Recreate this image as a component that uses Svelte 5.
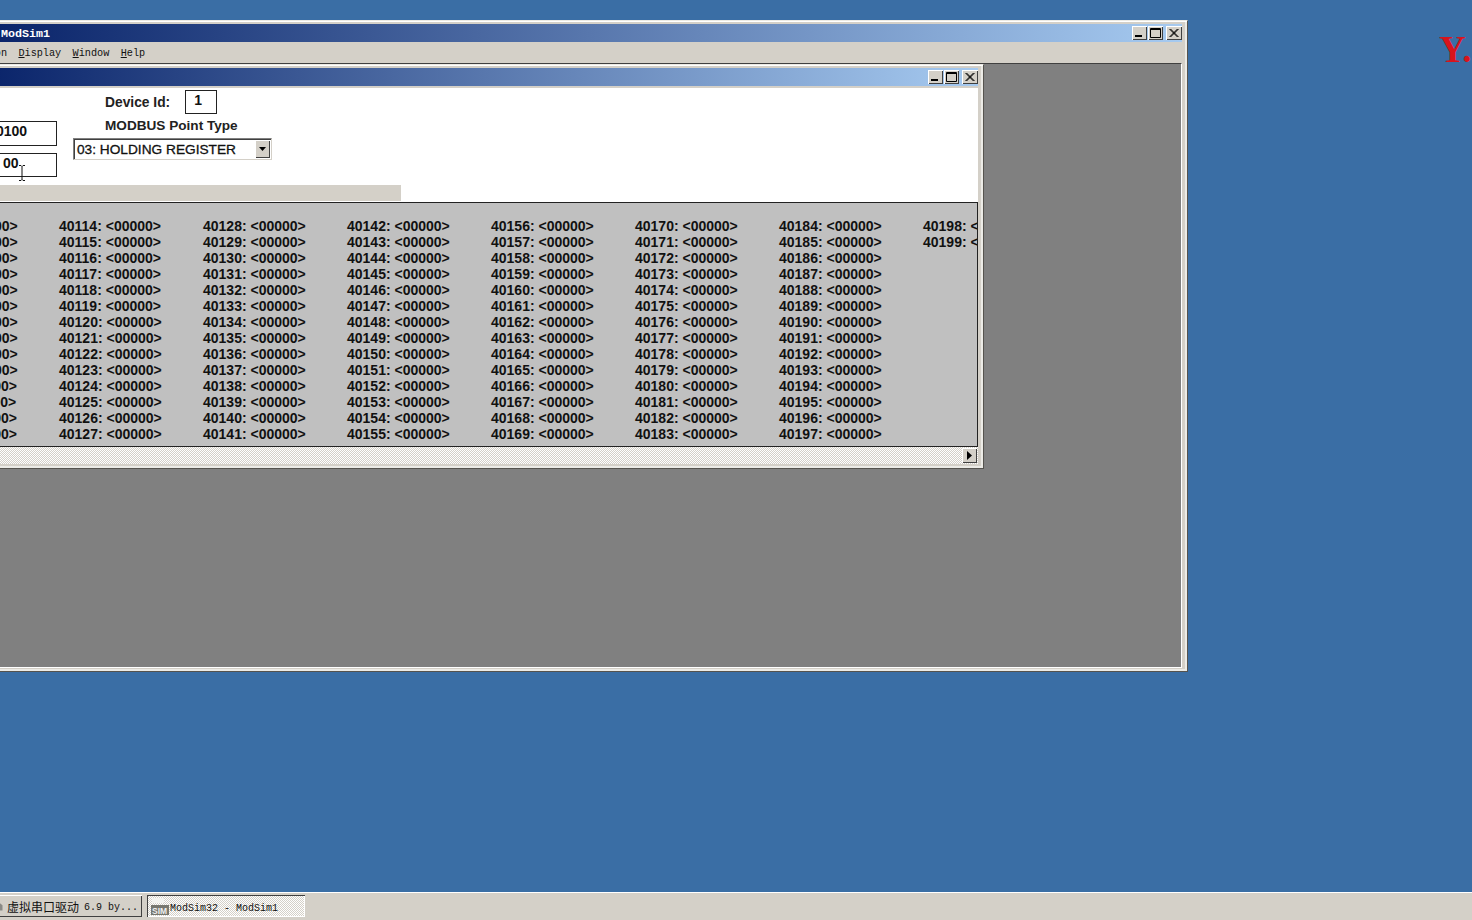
<script>
   // registers 40100..40199, column-wise, 14 per column
   const registers = Array.from({ length: 100 }, (_, i) => 40100 + i);
   const menus = ["File", "Connection", "Display", "Window", "Help"];
</script>

{#snippet caption()}
   <div class="caps">
      <span class="cap"><svg viewBox="0 0 15 14"><rect x="3" y="9" width="7" height="2" /></svg></span>
      <span class="cap"><svg viewBox="0 0 15 14"><path d="M2.5 2.5h10v9h-10z M2.5 3.5h10" fill="none" stroke="#000" /></svg></span>
      <span class="cap close"><svg viewBox="0 0 15 14"><path d="M3.5 3l8 8M4.5 3l8 8M11.5 3l-8 8M12.5 3l-8 8" fill="none" stroke="#000" /></svg></span>
   </div>
{/snippet}

<div class="desktop">
   <div class="workspace">
      <span class="wallpaper-text">Y.</span>

      <div class="window main">
         <div class="titlebar">
            <span class="title">ModSim32 - ModSim1</span>
            {@render caption()}
         </div>
         <div class="menubar">
            {#each menus as item}
               <span><u>{item[0]}</u>{item.slice(1)}</span>
            {/each}
         </div>

         <div class="client">
            <div class="window child">
               <div class="titlebar small">
                  <span class="title"></span>
                  {@render caption()}
               </div>

               <div class="form">
                  <div class="fields">
                     <div class="left-col">
                        <div class="box addr">0100</div>
                        <div class="box len">00</div>
                     </div>
                     <div class="right-col">
                        <div class="device">
                           <span class="label">Device Id:</span>
                           <span class="box id">1</span>
                        </div>
                        <div class="label point">MODBUS Point Type</div>
                        <div class="combo">
                           <span>03: HOLDING REGISTER</span>
                           <span class="combo-btn"><svg viewBox="0 0 15 17"><path d="M4 7h7l-3.5 4z" /></svg></span>
                        </div>
                     </div>
                  </div>
                  <div class="statusbar"></div>
                  <svg class="ibeam" viewBox="0 0 8 16"><path d="M1 .5h2l1 1 1-1h2M4 1.5v13M1 15.5h2l1-1 1 1h2" fill="none" stroke="#111" /></svg>
               </div>

               <div class="registers">
                  {#each registers as r}
                     <span>{r}: &lt;00000&gt;</span>
                  {/each}
               </div>

               <div class="hscroll">
                  <span class="arrow"><svg viewBox="0 0 15 15"><path d="M5 3l5 4.5-5 4.5z" /></svg></span>
               </div>
            </div>
         </div>
      </div>
   </div>

   <div class="taskbar">
      <div class="task raised">
         <svg class="task-icon" viewBox="0 0 16 16"><path d="M8 2l6 5v7H2V7z" fill="#8a8a86" /><path d="M6 8h4v4H6z" fill="#e8e8e4" /></svg>
         <span class="cjk">虚拟串口驱动</span><span class="version">6.9 by...</span>
      </div>
      <div class="task pressed">
         <svg class="sim-icon" viewBox="0 0 18 18">
            <rect x="1" y="1" width="12" height="5" fill="#f4f4f0" />
            <rect x="0" y="8" width="18" height="10" fill="#77776f" />
            <text x="1" y="16.5" font-size="8.5" font-weight="700" fill="#f0f0f0" font-family="Liberation Sans, sans-serif">SIM</text>
         </svg>
         <span class="task-name">ModSim32 - ModSim1</span>
      </div>
   </div>
</div>

<style>
:global(body) {
   margin: 0;
   overflow: hidden;
}
.desktop {
   display: flex;
   flex-direction: column;
   width: 1472px;
   height: 920px;
   overflow: hidden;
   background: #3a6ea5;
   font-family: "Liberation Sans", Arial, sans-serif;
}
.workspace {
   position: relative;
   flex: 1;
}
.wallpaper-text {
   position: absolute;
   left: 1439px;
   top: 28px;
   font: 700 37px "Liberation Serif", serif;
   color: #d8141c;
}
.window {
   position: absolute;
   display: flex;
   flex-direction: column;
   box-sizing: border-box;
   padding: 3px 4px 3px 3px;
   background: #d4d0c8;
   border: 1px solid;
   border-color: #eceae4 #55534e #55534e #eceae4;
   box-shadow: inset 1px 1px 0 #fff, inset -1px -1px 0 #ecebe6, inset -2px -2px 0 #ecebe6;
}
.main {
   left: -110px;
   top: 20px;
   width: 1298px;
   height: 652px;
   padding-right: 5px;
}
.child {
   left: 5px;
   top: 0;
   width: 1084px;
   height: 405px;
   padding-right: 5px;
}
.titlebar {
   display: flex;
   align-items: center;
   justify-content: space-between;
   flex: none;
   height: 18px;
   background: linear-gradient(to right, #0a246a 8%, #a6caf0);
}
.titlebar.small {
   height: 18px;
   margin-bottom: 2px;
}
.title {
   padding: 1px 0 0 30px;
   font: 700 11.67px "Liberation Mono", monospace;
   color: #fff;
   white-space: pre;
}
.caps {
   display: flex;
   gap: 2px;
}
.cap {
   display: block;
   width: 15px;
   height: 14px;
   background: #d4d0c8;
   box-shadow: inset 1px 1px 0 #fff, inset -1px -1px 0 #404040;
}
.cap + .cap {
   margin-left: -1px;
}
.cap.close {
   width: 16px;
   margin-left: 1px;
}
.cap svg {
   display: block;
   width: 15px;
   height: 14px;
}
.menubar {
   display: flex;
   flex: none;
   gap: 11.4px;
   align-items: center;
   box-sizing: border-box;
   height: 21px;
   padding: 1px 0 0 16px;
   font: 10.2px "Liberation Mono", monospace;
   color: #111;
}
.client {
   position: relative;
   flex: 1;
   background: #808080;
   border-top: 1px solid #404040;
   border-left: 1px solid #404040;
   border-right: 1px solid #fff;
   border-bottom: 1px solid #fff;
}
.form {
   position: relative;
   display: flex;
   flex-direction: column;
   flex: none;
   height: 114px;
   background: #fff;
}
.fields {
   display: flex;
   gap: 16px;
   flex: none;
   height: 97px;
   padding-left: 86px;
}
.left-col {
   display: flex;
   flex-direction: column;
   gap: 7px;
   padding-top: 33px;
   width: 67px;
}
.box {
   box-sizing: border-box;
   border: 1px solid #222;
   background: #fff;
   font: 700 14px "Liberation Sans", sans-serif;
   color: #111;
}
.addr {
   height: 25px;
   padding: 1px 0 0 5px;
}
.len {
   height: 24px;
   padding: 1px 0 0 12px;
}
.right-col {
   display: flex;
   flex-direction: column;
   width: 210px;
}
.device {
   display: flex;
   align-items: center;
   gap: 15px;
   height: 24px;
   margin: 2px 0 0 32px;
}
.label {
   font: 700 13.8px "Liberation Sans", sans-serif;
   color: #222;
   white-space: nowrap;
}
.id {
   width: 32px;
   height: 24px;
   padding-left: 8px;
   line-height: 19px;
}
.point {
   margin: 2px 0 0 32px;
   height: 19px;
   line-height: 19px;
   font-size: 13.6px;
}
.combo {
   display: flex;
   align-items: center;
   justify-content: space-between;
   box-sizing: border-box;
   width: 199px;
   height: 22px;
   margin-top: 3px;
   padding-left: 3px;
   border: 1px solid;
   border-color: #808080 #d4d0c8 #d4d0c8 #808080;
   box-shadow: inset 1px 1px 0 #404040;
   font: 13.7px "Liberation Sans", sans-serif;
   -webkit-text-stroke: 0.3px #111;
   color: #111;
   white-space: nowrap;
}
.combo-btn {
   width: 15px;
   height: 18px;
   margin-right: 1px;
   background: #d4d0c8;
   box-shadow: inset 1px 1px 0 #fff, inset -1px -1px 0 #404040;
}
.combo-btn svg {
   display: block;
}
.statusbar {
   width: 497px;
   height: 16px;
   background: #d4d0c8;
}
.ibeam {
   position: absolute;
   left: 114px;
   top: 77px;
   width: 8px;
   height: 16px;
}
.registers {
   display: grid;
   flex: none;
   grid-auto-flow: column;
   grid-template-rows: repeat(14, 16px);
   grid-auto-columns: 144px;
   box-sizing: border-box;
   height: 245px;
   padding: 15px 0 0 11px;
   overflow: hidden;
   background: #c0c0c0;
   border-top: 1px solid #222;
   border-bottom: 1px solid #222;
   border-right: 1px solid #222;
   font: 700 14px/16px "Liberation Sans", sans-serif;
   color: #111;
   white-space: nowrap;
}
.hscroll {
   display: flex;
   justify-content: flex-end;
   flex: none;
   height: 17px;
   background: repeating-conic-gradient(#fff 0 25%, #d4d0c8 0 50%) 0 0 / 2px 2px;
}
.arrow {
   width: 15px;
   height: 15px;
   margin: 1px 1px 0 0;
   background: #d4d0c8;
   box-shadow: inset 1px 1px 0 #fff, inset -1px -1px 0 #404040;
}
.arrow svg {
   display: block;
}
.taskbar {
   display: flex;
   gap: 5px;
   flex: none;
   box-sizing: border-box;
   height: 28px;
   padding-top: 3px;
   background: #d4d0c8;
   box-shadow: inset 0 1px 0 #fff;
}
.task {
   display: flex;
   align-items: center;
   box-sizing: border-box;
   height: 22px;
   font: 10px "Liberation Mono", monospace;
   color: #111;
   white-space: pre;
}
.raised {
   width: 202px;
   margin-left: -60px;
   padding-left: 52px;
   box-shadow: inset 1px 1px 0 #fff, inset -1px -1px 0 #404040;
}
.cjk {
   margin-left: 3px;
   font: 12px "Noto Sans CJK SC", sans-serif;
}
.version {
   margin-left: 5px;
   padding-top: 2px;
}
.task-icon {
   width: 12px;
   height: 12px;
}
.pressed {
   width: 158px;
   padding-left: 4px;
   gap: 1px;
   background: repeating-conic-gradient(#fff 0 25%, #d4d0c8 0 50%) 0 0 / 2px 2px;
   box-shadow: inset 1px 1px 0 #404040, inset -1px -1px 0 #fff;
}
.task-name {
   padding-top: 4px;
}
.sim-icon {
   width: 18px;
   height: 18px;
}
</style>
